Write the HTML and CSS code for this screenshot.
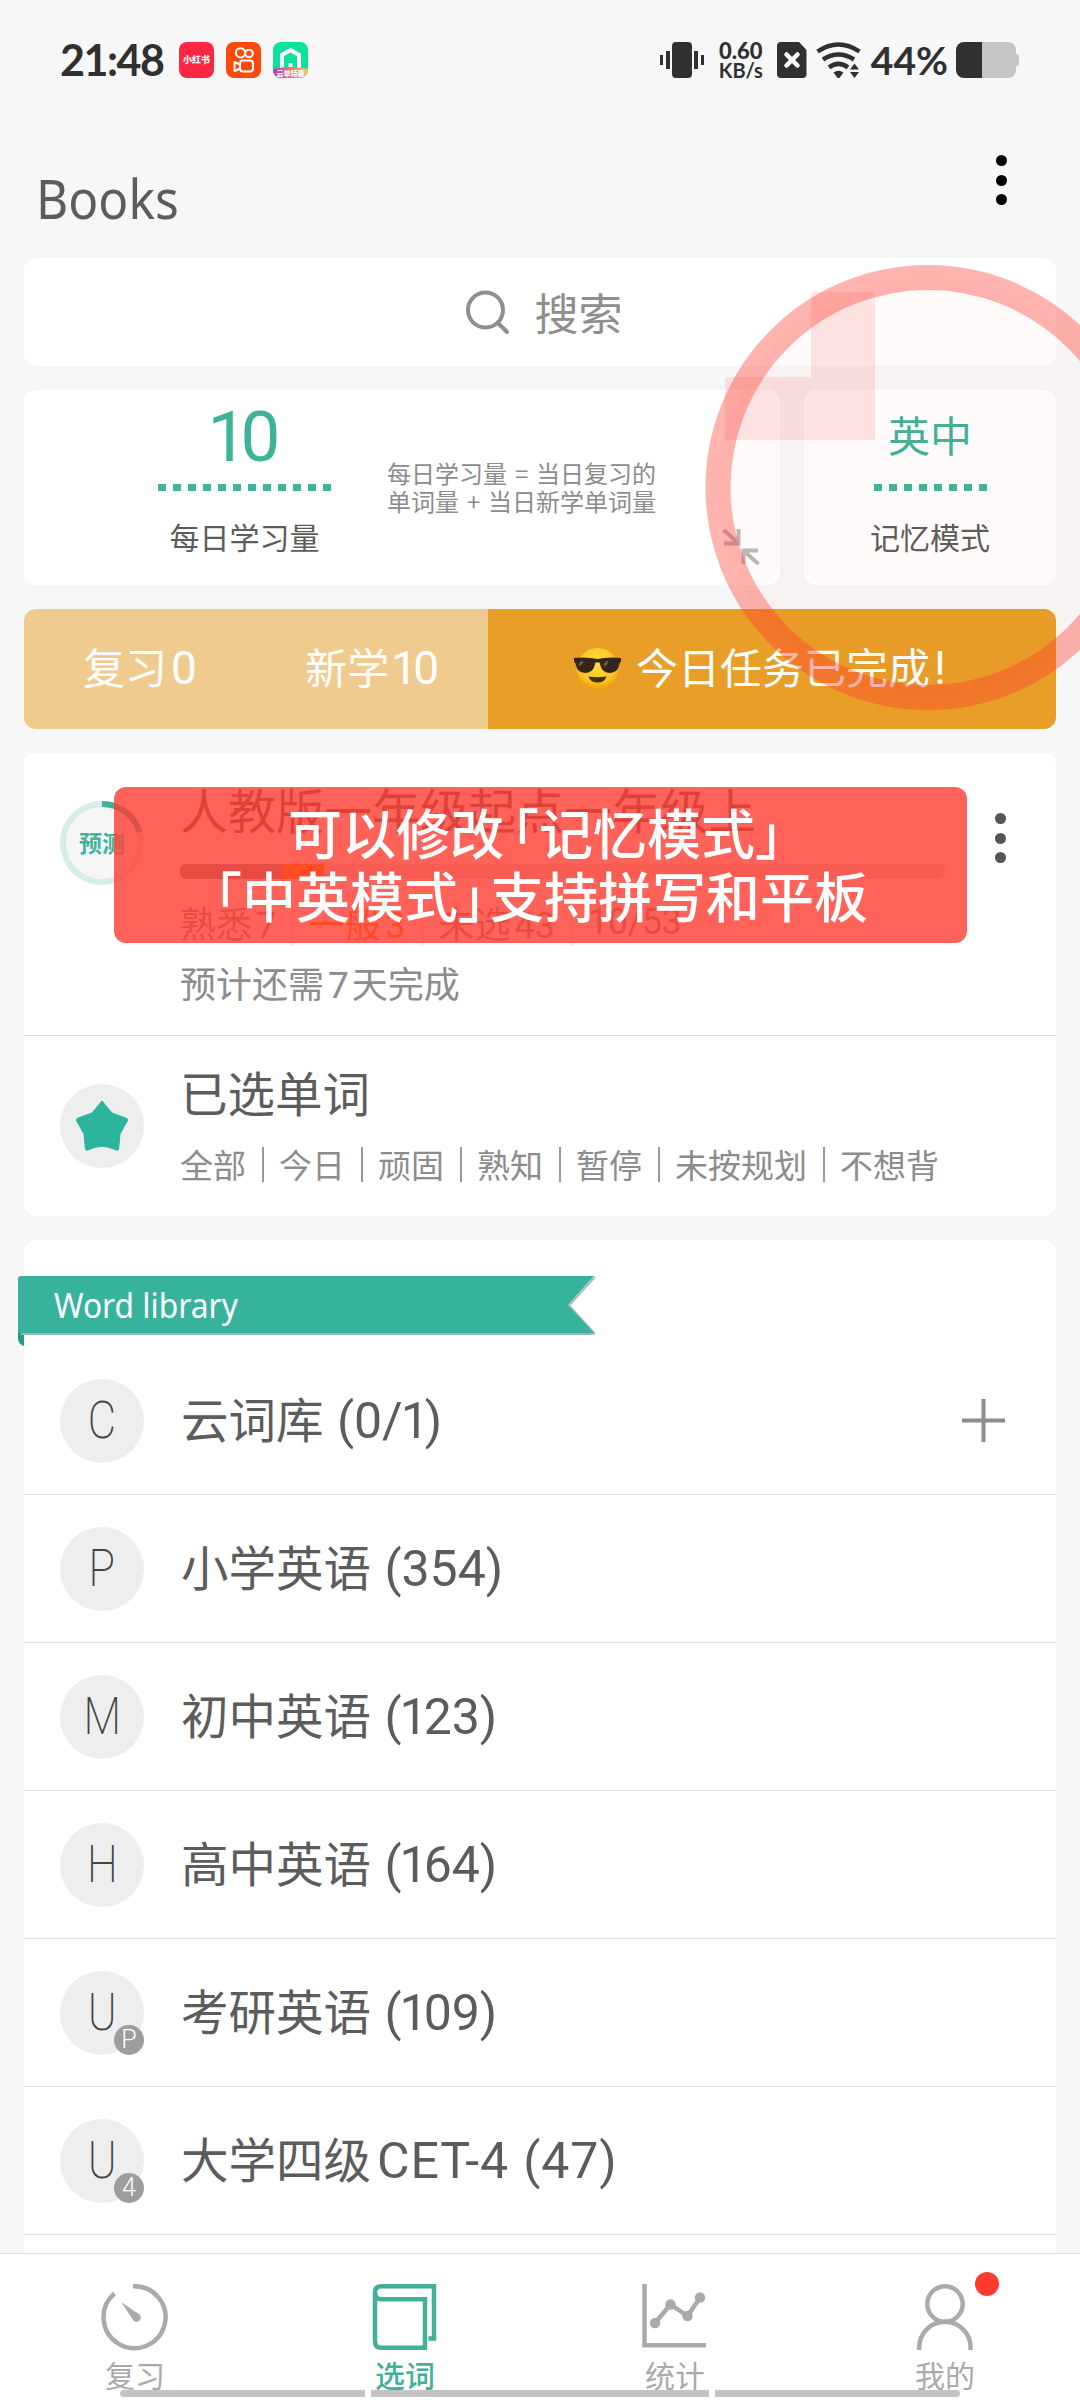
FILE: index.html
```html
<!DOCTYPE html>
<html lang="zh-CN">
<head>
<meta charset="utf-8">
<title>Books</title>
<link rel="stylesheet" href="styles.css">
</head>
<body>
<div class="screen">
  <header class="status">
    <span class="clock">21:48</span>
    <span class="app app-red"><span class="app-name">小红书</span></span>
    <svg class="app-svg" viewBox="0 0 35 36"><rect width="35" height="36" rx="8" fill="#fb4a0c"/><g fill="none" stroke="#fff" stroke-width="2"><circle cx="14.500" cy="10.800" r="4.600"/><circle cx="23" cy="11.500" r="3.800"/><rect x="14" y="18.600" width="13" height="11" rx="3"/><path d="M14 22.500L8.500 20v9l5.500-2.500" stroke-linejoin="round"/></g></svg>
    <svg class="app-svg" viewBox="0 0 35 36"><defs><clipPath id="r"><rect width="35" height="36" rx="8"/></clipPath><linearGradient id="g"><stop offset="0" stop-color="#c437b8"/><stop offset=".5" stop-color="#f0707a"/><stop offset="1" stop-color="#f8c85c"/></linearGradient></defs><g clip-path="url(#r)"><rect width="35" height="36" fill="#0be29a"/><path d="M9 27V13l8.500-5 8.500 5v14" fill="none" stroke="#fff" stroke-width="4"/><path d="M15.500 27v-6h4v6" fill="#fff"/><path d="M0 27Q17 23 35 27v9H0z" fill="url(#g)"/></g><text class="tiny" x="17.500" y="33.700" text-anchor="middle">云单特惠</text></svg>
    <div class="status-right">
      <svg width="46" height="36" viewBox="0 0 46 36" fill="#303030"><rect x="13" width="20" height="36" rx="4"/><rect x="1" y="13" width="3" height="10"/><rect x="7" y="9" width="4" height="18"/><rect x="35" y="9" width="4" height="18"/><rect x="42" y="13" width="3" height="10"/></svg>
      <span class="speed"><b>0.60</b><i>KB/s</i></span>
      <svg class="sim" width="30" height="36" viewBox="0 0 30 36"><path d="M4 0h18l7.500 8v24a4 4 0 0 1-4 4H4a4 4 0 0 1-4-4V4a4 4 0 0 1 4-4z" fill="#303030"/><path d="M9.500 12.500l11 11m0-11l-11 11" stroke="#fff" stroke-width="4.500" stroke-linecap="round"/></svg>
      <svg class="wifi" width="46" height="36" viewBox="0 0 46 36"><g fill="none" stroke="#303030" stroke-width="4.500"><path d="M1.500 9.500Q22.500-4.500 43.500 9.500"/><path d="M7 17.500Q22.500 7.500 38 17.500"/><path d="M13 25.300Q22.500 18.500 32 25.300"/></g><path d="M17.500 30.500Q22.500 27 27.500 30.500L24 35.200Q22.500 37 21 35.200zM34 27.500l4.500-6 4.500 6zM34 30l4.500 6 4.500-6z" fill="#303030"/></svg>
      <span class="pct">44%</span>
      <svg width="64" height="36" viewBox="0 0 64 36"><path d="M26 0h26a8 8 0 0 1 8 8v4q3 0 3 3v6q0 3-3 3v4a8 8 0 0 1-8 8H26z" fill="#c6c6c6"/><path d="M26 0H8a8 8 0 0 0-8 8v20a8 8 0 0 0 8 8h18z" fill="#303030"/></svg>
    </div>
  </header>

  <div class="titlebar"><h1>Books</h1><span class="dots dots-dark"><i></i><i></i><i></i></span></div>

  <main class="content">
    <section class="card search">
      <svg width="45" height="45" viewBox="0 0 45 45" fill="none" stroke="#8e8e8e" stroke-width="4" stroke-linecap="round"><circle cx="20.500" cy="20" r="17.500"/><path d="M33.500 33.500L42 42"/></svg>
      <span>搜索</span>
    </section>

    <div class="goal-row">
      <section class="card goal">
        <div class="metric goal-metric"><span class="num">10</span><span class="dash dash-12"></span><span class="label">每日学习量</span></div>
        <p class="hint">每日学习量 = 当日复习的<br>单词量 + 当日新学单词量</p>
        <svg class="collapse" width="38" height="38" viewBox="0 0 38 38" fill="none" stroke="#b9b9b9" stroke-width="4"><path d="M1.500 2L14 13M2 15.500h14.500V1"/><path d="M36.500 36L24 25M36 22.500H21.500V36"/></svg>
      </section>
      <section class="card mode metric"><span class="num num-cn">英中</span><span class="dash dash-8"></span><span class="label">记忆模式</span></section>
    </div>

    <section class="task">
      <div class="task-left"><span>复习<em>0</em></span><span>新学<em class="ten">10</em></span></div>
      <div class="task-right">
        <svg width="47" height="45" viewBox="0 0 47 45"><defs><radialGradient id="e" cx=".5" cy=".35" r=".65"><stop offset="0" stop-color="#ffe03a"/><stop offset=".7" stop-color="#fcc624"/><stop offset="1" stop-color="#ee9a10"/></radialGradient></defs><circle cx="23.500" cy="22" r="21" fill="url(#e)"/><path d="M0 11Q12 9.500 23.500 12Q35 9.500 47 11v3.500q-1.500 1-2 4q-1.500 7-9 7.500q-7.500 0-9.500-7l-1-3.500h-4l-1 3.500q-2 7-9.500 7q-7.500-.5-9-7.500q-.5-3-2-4z" fill="#35261c"/><path d="M5 17q1-3 4-3q1 1-1 3l-2 2q-1.500 0-1-2zM30 17q1-3 4-3q1 1-1 3l-2 2q-1.500 0-1-2z" fill="#7a5d42"/><path d="M14.500 29.500Q23.500 31 32.500 29.500Q31 35.500 23.500 35.500Q16 35.500 14.500 29.500z" fill="#4a2f12"/></svg>
        <span>今日任务已完成<em>!</em></span>
      </div>
    </section>

    <section class="card plan">
      <div class="book">
        <div class="ring"><svg width="84" height="84" viewBox="0 0 84 84" fill="none"><circle cx="42" cy="42" r="39" fill="#f6f6f6" stroke="#d6eee9" stroke-width="6"/><path d="M42 3A39 39 0 0 1 79.500 31" stroke="#3fb39a" stroke-width="6"/></svg><span>预测</span></div>
        <div class="book-main">
          <h2>人教版一年级起点一年级上</h2>
          <div class="bar"><i class="bar-known"></i><i class="bar-mid"></i></div>
          <p class="stats"><span>熟悉<em>7</em></span><span class="warn">一般<em>3</em></span><span>未选<em>43</em></span><span class="ratio">10/53</span></p>
          <p class="eta">预计还需<em>7</em>天完成</p>
        </div>
        <span class="dots"><i></i><i></i><i></i></span>
      </div>
      <div class="chosen">
        <span class="avatar"><svg width="52" height="52" viewBox="0 0 52 52"><path d="M26 1L36 13L51 18.500Q52 20 51 21.500L44 34L42.500 49.500Q42 50.500 40.500 50Q32 46.500 26 46.200Q20 46.500 11.500 50Q10 50.500 9.500 49.500L8 34L1 21.500Q0 20 1 18.500L16 13z" fill="#2ab59c" stroke="#2ab59c" stroke-width="1" stroke-linejoin="round"/></svg></span>
        <div><h2>已选单词</h2>
        <p class="filters"><span>全部</span><span>今日</span><span>顽固</span><span>熟知</span><span>暂停</span><span>未按规划</span><span>不想背</span></p></div>
      </div>
    </section>

    <section class="card library">
      <div class="ribbon">
        <svg width="580" height="72" viewBox="0 0 580 72"><path d="M0 57h6v13q-6-2-6-8z" fill="#239c85"/><path d="M3 58H576" stroke="#9db8bd" stroke-width="2"/><path d="M577 1L551 29.500 577 58" fill="none" stroke="#a9bcc6" stroke-width="2"/><path d="M3 0H576L550 29 576 57H0V3q0-3 3-3z" fill="#37b39c"/></svg>
        <span>Word library</span>
      </div>
      <ul>
        <li><span class="avatar"><span class="letter">C</span></span><span class="name">云词库<em> (0/<span class="one">1</span>)</em></span><svg class="add" width="43" height="43" viewBox="0 0 43 43" stroke="#8c8c8c" stroke-width="4"><path d="M0 21.500h43M21.500 0v43"/></svg></li>
        <li><span class="avatar"><span class="letter">P</span></span><span class="name">小学英语<em> (354)</em></span></li>
        <li><span class="avatar"><span class="letter">M</span></span><span class="name">初中英语<em> (<span class="one">1</span>23)</em></span></li>
        <li><span class="avatar"><span class="letter">H</span></span><span class="name">高中英语<em> (<span class="one">1</span>64)</em></span></li>
        <li><span class="avatar"><span class="letter">U</span><b class="badge">P</b></span><span class="name">考研英语<em> (<span class="one">1</span>09)</em></span></li>
        <li><span class="avatar"><span class="letter">U</span><b class="badge">4</b></span><span class="name">大学四级<em class="cet">CET-4 (47)</em></span></li>
      </ul>
    </section>
  </main>

  <nav class="tabs">
    <a><svg width="68" height="68" viewBox="0 0 68 68"><path d="M32 3.200A31 31 0 1 1 13.500 10.500" fill="none" stroke="#aaa" stroke-width="4.500"/><path d="M20 19L38.500 31.500a4 4 0 1 1-6 6z" fill="#aaa"/></svg>复习</a>
    <a class="on"><svg width="68" height="68" viewBox="0 0 68 68" fill="none" stroke="#43b09a" stroke-width="4.500"><path d="M4 58V9.500Q4 3.200 10.500 3.200H63V55.500H57.500"/><path d="M4 10Q4.500 16.300 10 16.300H54V64.800H10Q4 64.800 4 58"/></svg>选词</a>
    <a><svg width="68" height="68" viewBox="0 0 68 68" fill="#aaa" stroke="#aaa"><path d="M3.500 1V62.300H65" fill="none" stroke-width="4.500"/><path d="M14 40L29.500 21.500 46.500 33 59 14.500" fill="none" stroke-width="4.500"/><g stroke="none"><circle cx="14" cy="40" r="5.200"/><circle cx="29.500" cy="21.500" r="5.200"/><circle cx="46.500" cy="33" r="5.200"/><circle cx="59" cy="14.500" r="5.200"/></g></svg>统计</a>
    <a><svg width="68" height="68" viewBox="0 0 68 68" fill="none" stroke="#aaa" stroke-width="4.500"><circle cx="34" cy="21" r="17.700"/><path d="M8.200 67V64.500A25.700 25.700 0 0 1 59.600 64.500V67"/></svg>我的<i class="notice"></i></a>
  </nav>

  <svg class="spotlight" width="420" height="450" viewBox="660 260 420 450"><circle cx="928" cy="487.500" r="210" fill="#ff3b30" fill-opacity=".02"/><circle cx="928" cy="487.500" r="210" fill="none" stroke="#ff3b30" stroke-opacity=".38" stroke-width="25"/><path d="M811 292h64v148H725v-63h86z" fill="#ff3b30" fill-opacity=".12"/></svg>
  <div class="tip"><p>可以修改<span class="open">「</span>记忆模式<span class="close">」</span></p><p><span class="open">「</span>中英模式<span class="close">」</span>支持拼写和平板</p></div>
  <div class="gesture"><i></i><i class="mid"></i><i></i></div>
</div>
</body>
</html>
```
FILE: styles.css
```css
* { box-sizing: border-box; }
body, h1, h2, p, ul { margin: 0; padding: 0; }
body { background: #f7f7f7; font-family: "Noto Sans CJK SC", sans-serif; color: #5c5c5c; }
h1, h2 { font-weight: 400; }
i, em { font-style: normal; }
em { font-family: Roboto, "Noto Sans CJK SC", sans-serif; white-space: pre; }
svg { display: block; flex: none; overflow: visible; }
.screen { position: relative; width: 1080px; height: 2400px; overflow: hidden; display: flex; flex-direction: column; }

.status { height: 120px; padding: 0 60px; display: flex; align-items: center; color: #303030; font-family: Lato, sans-serif; }
.clock { width: 119px; font-size: 43px; font-weight: 700; line-height: 50px; letter-spacing: -1.500px; }
.app, .app-svg { width: 35px; height: 36px; margin-right: 12px; }
.app { border-radius: 8px; background: #ff2642; display: flex; align-items: center; justify-content: center; }
.app-name { font: 900 9px/12px "Noto Sans CJK SC", sans-serif; color: #fff; white-space: nowrap; }
.tiny { font: 900 7px "Noto Sans CJK SC", sans-serif; fill: #fff; }
.status-right { margin-left: auto; display: flex; align-items: center; }
.speed { width: 48px; margin: 0 12px 0 12px; display: flex; flex-direction: column; align-items: center; line-height: 20px; font-weight: 700; }
.speed b { font-size: 22px; }
.speed i { font-size: 20px; line-height: 19px; }
.wifi { margin-left: 9px; }
.pct { margin: 0 8px 0 9px; font-size: 39px; font-weight: 700; line-height: 40px; }

.titlebar { height: 138px; padding: 0 73px 0 36px; display: flex; justify-content: space-between; align-items: flex-start; }
.titlebar h1 { margin-top: 43px; font: 400 54px/70px "Noto Sans", sans-serif; transform: scaleX(.92); transform-origin: left; }
.dots { display: flex; flex-direction: column; gap: 8.500px; color: #555; }
.dots i { width: 11px; height: 11px; border-radius: 50%; background: currentColor; }
.dots-dark { margin-top: 35px; color: #000; }

.content { flex: 1; min-height: 0; padding: 0 24px; display: flex; flex-direction: column; gap: 24px; }
.card { background: #fff; border-radius: 12px; flex: none; }
.search { height: 108px; padding-left: 7px; display: flex; align-items: center; justify-content: center; gap: 25px; font-size: 44px; line-height: 60px; color: #8e8e8e; }
.goal-row { height: 195px; flex: none; display: flex; gap: 24px; }
.goal { width: 756px; padding: 0 20px 0 134px; display: flex; }
.metric { display: flex; flex-direction: column; align-items: center; }
.mode { flex: 1; }
.goal-metric { width: 173px; }
.num { height: 94px; padding-right: 8px; font: 400 71px/94px Roboto, sans-serif; letter-spacing: -7px; color: #3fb39a; }
.num-cn { padding-right: 0; font: 400 42px/88px "Noto Sans CJK SC", sans-serif; letter-spacing: 0; }
.dash { height: 7px; background: repeating-linear-gradient(90deg, #43b39b 0 8px, transparent 8px 15px); }
.dash-12 { width: 173px; }
.dash-8 { width: 113px; }
.label { margin-top: 23px; font-size: 30px; line-height: 44px; }
.hint { width: 290px; margin: 69px 0 0 56px; font-size: 24px; line-height: 28px; word-spacing: 2.500px; color: #8c8c8c; white-space: nowrap; }
.collapse { margin: 138px 0 0 auto; }

.task { height: 120px; flex: none; display: flex; border-radius: 12px; overflow: hidden; color: #fff; font-size: 42px; line-height: 60px; }
.task span { margin-top: -5px; }
.task em { margin-left: 4px; font-size: 46px; }
.task .ten { margin-left: 2px; letter-spacing: -4px; }
.task-left { width: 464px; padding: 0 53px 0 59px; background: #f0cb8f; display: flex; align-items: center; justify-content: space-between; }
.task-right { flex: 1; padding-left: 86px; background: #e99e28; display: flex; align-items: center; gap: 15px; }

.book { height: 283px; padding: 0 50px 0 36px; border-bottom: 1px solid #e0e0e0; display: flex; align-items: flex-start; }
.ring { width: 84px; height: 84px; margin: 48px 36px 0 0; display: grid; place-items: center; }
.ring > * { grid-area: 1 / 1; }
.ring span { margin-top: -3px; font-size: 23px; font-weight: 700; line-height: 30px; color: #43b39b; }
.book-main { width: 765px; margin-right: auto; }
h2 { font-size: 47.500px; line-height: 60px; white-space: nowrap; }
.book h2 { margin-top: 25px; font-size: 48px; }
.bar { height: 15px; margin-top: 26px; border-radius: 6px; overflow: hidden; background: #ddd; display: flex; }
.bar-known { width: 102px; background: #8c8c8c; }
.bar-mid { width: 42px; background: #ff8a00; }
.stats { height: 42px; margin-top: 25px; display: flex; font-size: 36px; line-height: 36px; color: #8c8c8c; }
.stats span + span { margin-left: 16px; padding-left: 16px; border-left: 1px solid #ddd; }
.stats em { margin-left: 4px; }
.stats .warn { color: #ff8a00; }
.ratio { font-family: Roboto, sans-serif; letter-spacing: -.5px; }
.eta { margin-top: 14px; font-size: 36px; line-height: 44px; color: #8c8c8c; }
.eta em { margin: 0 3px 0 4px; font-size: 37px; }
.book > .dots { margin-top: 60px; }
.chosen { height: 180px; padding-left: 36px; display: flex; align-items: center; gap: 36px; }
.chosen h2 { margin-top: -8px; }
.filters { display: flex; margin-top: 25px; font-size: 33px; line-height: 35px; color: #8c8c8c; }
.filters span + span { margin-left: 15.500px; padding-left: 15.500px; border-left: 2px solid #999; }
.avatar { position: relative; width: 84px; height: 84px; flex: none; border-radius: 50%; background: #eee; display: flex; align-items: center; justify-content: center; font: 200 52px/84px Roboto, sans-serif; color: #444; }
.letter { transform: scaleX(.84); }

.library { height: 1100px; padding-top: 36px; }
.ribbon { height: 71px; margin-left: -6px; display: grid; }
.ribbon > * { grid-area: 1 / 1; }
.ribbon span { margin-left: 36px; font: 400 35px/58px "Noto Sans", sans-serif; color: #fff; transform: scaleX(.907); transform-origin: left; }
ul { list-style: none; }
li { height: 148px; padding: 0 52px 0 36px; border-bottom: 1px solid #e0e0e0; display: flex; align-items: center; }
.name { margin: -2px auto 0 37px; font-size: 47.500px; line-height: 64px; }
.name em { font-size: 50px; word-spacing: 1px; }
.one { margin-left: -2px; letter-spacing: -4px; }
.name .cet { margin-left: 6px; letter-spacing: .9px; }
.add { margin-right: -1px; }
.badge { position: absolute; right: 0; bottom: 0; width: 30px; height: 30px; border-radius: 50%; background: #9c9e9d; color: #fff; font: 300 25px/30px Roboto, sans-serif; text-align: center; }

.tabs { position: relative; height: 147px; flex: none; padding-top: 29px; border-top: 1px solid #e0e0e0; background: #fff; display: flex; }
.tabs a { position: relative; flex: 1; display: flex; flex-direction: column; align-items: center; gap: 5px; font-size: 30px; line-height: 36px; color: #aaa; }
.tabs .on { color: #43b09a; font-weight: 500; }
.notice { position: absolute; left: 165px; top: -11px; width: 24px; height: 24px; border-radius: 50%; background: #ff3b30; }

.spotlight { position: absolute; left: 660px; top: 260px; }
.tip { position: absolute; left: 114px; top: 787px; width: 853px; height: 156px; padding: 13px 6px 0 0; border-radius: 12px; background: rgba(255, 59, 48, .8); color: #fff; font-size: 54px; font-weight: 500; line-height: 63px; text-align: center; }
.open, .close { font-feature-settings: "halt"; }
.open { padding-left: 8px; }
.close { padding-right: 5px; }
.gesture { position: absolute; left: 120px; top: 2390px; width: 840px; height: 7px; display: flex; gap: 6px; border-radius: 4px; overflow: hidden; }
.gesture i { width: 245px; background: #c3c3c3; }
.gesture .mid { width: 338px; }
```
